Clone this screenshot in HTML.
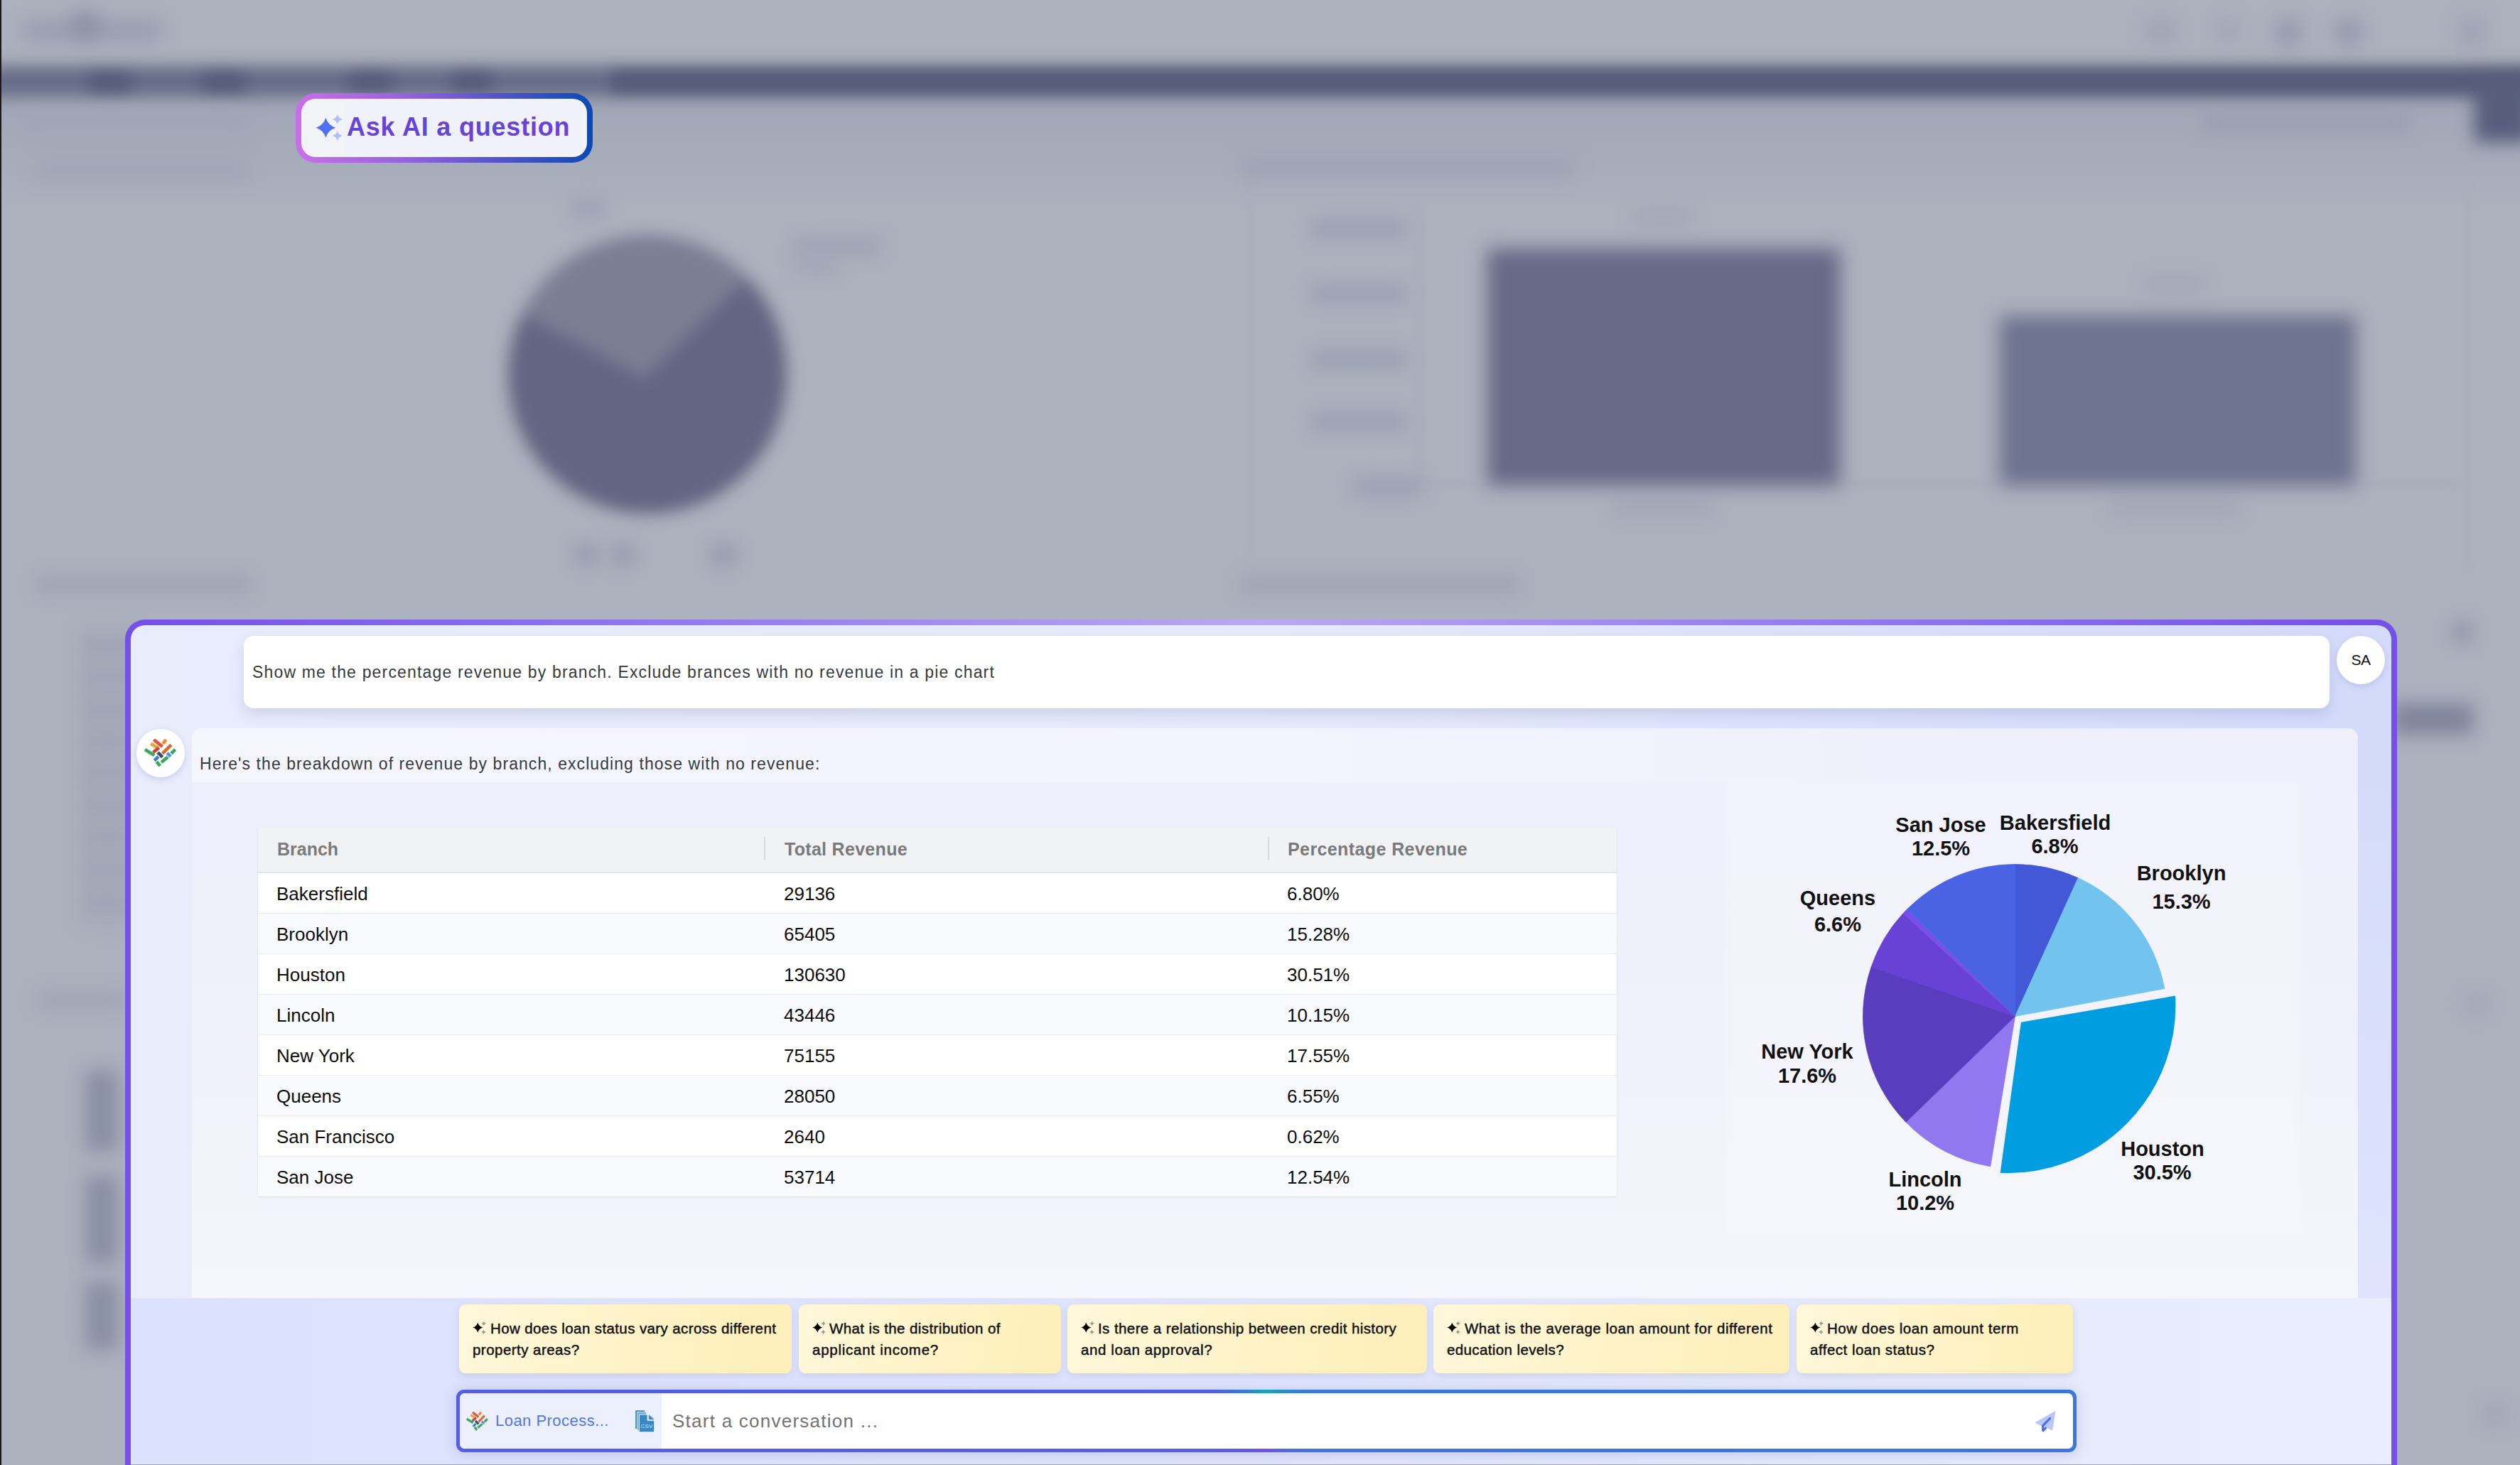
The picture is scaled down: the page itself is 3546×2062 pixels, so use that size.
<!DOCTYPE html>
<html><head><meta charset="utf-8">
<style>
html,body{margin:0;padding:0;}
body{width:3546px;height:2062px;overflow:hidden;position:relative;background:#aab0bc;font-family:"Liberation Sans",sans-serif;}
.a{position:absolute;}
.t{position:absolute;white-space:nowrap;}
#bg{position:absolute;left:0;top:0;width:3546px;height:2062px;overflow:hidden;}
#bg div{position:absolute;}
.row{position:absolute;left:363px;width:1912px;height:56px;border-bottom:1px solid #e8eaee;}
.row span{position:absolute;top:1px;line-height:57px;font-size:26px;color:#0d0d0d;white-space:nowrap;}
.chip{position:absolute;top:1836px;height:97px;border-radius:9px;background:linear-gradient(100deg,#fef7da 0%,#fef2c4 60%,#feefba 100%);box-shadow:0 4px 10px rgba(140,150,200,.28);}
.chip .l{position:absolute;left:19px;font-size:20.5px;font-weight:400;-webkit-text-stroke:0.45px #111;color:#111;white-space:nowrap;line-height:29px;}
.pl{font-family:"Liberation Sans",sans-serif;font-weight:700;font-size:29px;fill:#111;}
</style></head>
<body>
<!-- BACKGROUND -->
<div id="bg">
  <div style="left:0;top:0;width:3546px;height:95px;background:#abb1bd;"></div>
  <div style="left:0;top:140px;width:3546px;height:1922px;background:#abb1bd;"></div>
  <div style="left:30px;top:28px;width:200px;height:30px;border-radius:15px;background:#989eb0;filter:blur(12px);"></div>
  <div style="left:100px;top:15px;width:40px;height:40px;border-radius:50%;background:#8d93a6;filter:blur(12px);"></div>
  <div style="left:3020px;top:28px;width:40px;height:30px;background:#9ea4b4;filter:blur(12px);"></div>
  <div style="left:3120px;top:28px;width:30px;height:30px;background:#a0a6b6;filter:blur(12px);"></div>
  <div style="left:3200px;top:25px;width:40px;height:40px;border-radius:50%;background:#959bad;filter:blur(12px);"></div>
  <div style="left:3285px;top:25px;width:40px;height:40px;border-radius:50%;background:#959bad;filter:blur(12px);"></div>
  <div style="left:3460px;top:25px;width:36px;height:40px;background:#9ea4b4;filter:blur(12px);"></div>
  <div style="left:0;top:125px;width:3546px;height:170px;background:linear-gradient(180deg,#a0a6b5 0%,#a5abb9 50%,rgba(171,177,189,0) 100%);"></div>
  <div style="left:-20px;top:93px;width:3600px;height:43px;background:#666c87;filter:blur(11px);"></div>
  <div style="left:860px;top:101px;width:2720px;height:28px;background:#545a77;filter:blur(10px);"></div>
  <div style="left:125px;top:106px;width:60px;height:20px;background:#4f5573;filter:blur(11px);"></div>
  <div style="left:283px;top:106px;width:62px;height:20px;background:#4f5573;filter:blur(11px);"></div>
  <div style="left:490px;top:106px;width:62px;height:20px;background:#4f5573;filter:blur(11px);"></div>
  <div style="left:636px;top:106px;width:56px;height:20px;background:#4f5573;filter:blur(11px);"></div>
  <div style="left:3482px;top:110px;width:80px;height:90px;background:#575d7b;filter:blur(12px);"></div>
  <div style="left:30px;top:160px;width:320px;height:22px;background:#9ea4b4;filter:blur(12px);"></div>
  <div style="left:50px;top:228px;width:300px;height:22px;background:#9ea4b4;filter:blur(12px);"></div>
  <div style="left:1746px;top:222px;width:470px;height:26px;background:#9da3b3;filter:blur(12px);"></div>
  <div style="left:3100px;top:160px;width:290px;height:22px;background:#979dae;filter:blur(12px);"></div>
  <div style="left:715px;top:331px;width:392px;height:392px;border-radius:50%;background:conic-gradient(from 0deg at 191px 201px,#7a7f95 0deg 46deg,#626682 46deg 297.8deg,#7a7f95 297.8deg 360deg);filter:blur(11px);"></div>
  <div style="left:806px;top:280px;width:44px;height:26px;background:#9ca2b3;filter:blur(12px);"></div>
  <div style="left:1119px;top:336px;width:120px;height:22px;background:#9ca2b3;filter:blur(12px);"></div>
  <div style="left:1119px;top:362px;width:60px;height:22px;background:#a0a6b6;filter:blur(12px);"></div>
  <div style="left:810px;top:768px;width:30px;height:26px;background:#9399ab;filter:blur(12px);"></div>
  <div style="left:862px;top:768px;width:30px;height:26px;background:#9399ab;filter:blur(12px);"></div>
  <div style="left:1000px;top:768px;width:35px;height:26px;background:#9399ab;filter:blur(12px);"></div>
  <div style="left:52px;top:812px;width:300px;height:22px;background:#9da3b3;filter:blur(12px);"></div>
  <div style="left:1746px;top:812px;width:390px;height:22px;background:#9da3b3;filter:blur(12px);"></div>
  <div style="left:1846px;top:310px;width:132px;height:24px;background:#999fb1;filter:blur(12px);"></div>
  <div style="left:1846px;top:401px;width:132px;height:24px;background:#999fb1;filter:blur(12px);"></div>
  <div style="left:1846px;top:494px;width:132px;height:24px;background:#999fb1;filter:blur(12px);"></div>
  <div style="left:1846px;top:582px;width:132px;height:24px;background:#999fb1;filter:blur(12px);"></div>
  <div style="left:1906px;top:673px;width:94px;height:24px;background:#999fb1;filter:blur(12px);"></div>
  <div style="left:2300px;top:295px;width:80px;height:20px;background:#a0a6b6;filter:blur(12px);"></div>
  <div style="left:3020px;top:390px;width:80px;height:20px;background:#a0a6b6;filter:blur(12px);"></div>
  <div style="left:2270px;top:705px;width:140px;height:20px;background:#a0a6b6;filter:blur(12px);"></div>
  <div style="left:2970px;top:705px;width:180px;height:20px;background:#a0a6b6;filter:blur(12px);"></div>
  <div style="left:1995px;top:290px;width:3px;height:390px;background:#a4aab9;filter:blur(4px);"></div>
  <div style="left:1995px;top:680px;width:1460px;height:3px;background:#a4aab9;filter:blur(4px);"></div>
  <div style="left:1757px;top:250px;width:3px;height:530px;background:#a7adbb;filter:blur(4px);"></div>
  <div style="left:3472px;top:260px;width:3px;height:540px;background:#a7adbb;filter:blur(4px);"></div>
  <div style="left:2093px;top:350px;width:496px;height:333px;background:#666a87;filter:blur(13px);"></div>
  <div style="left:2814px;top:445px;width:501px;height:238px;background:#6e738f;filter:blur(13px);"></div>
  <div style="left:115px;top:885px;width:75px;height:420px;background:#a5abb9;filter:blur(12px);"></div>
  <div style="left:118px;top:900px;width:70px;height:18px;background:#9ea4b3;filter:blur(10px);"></div>
  <div style="left:118px;top:945px;width:70px;height:18px;background:#9ea4b3;filter:blur(10px);"></div>
  <div style="left:118px;top:990px;width:70px;height:18px;background:#9ea4b3;filter:blur(10px);"></div>
  <div style="left:118px;top:1035px;width:70px;height:18px;background:#9ea4b3;filter:blur(10px);"></div>
  <div style="left:118px;top:1080px;width:70px;height:18px;background:#9ea4b3;filter:blur(10px);"></div>
  <div style="left:118px;top:1125px;width:70px;height:18px;background:#9ea4b3;filter:blur(10px);"></div>
  <div style="left:118px;top:1170px;width:70px;height:18px;background:#9ea4b3;filter:blur(10px);"></div>
  <div style="left:118px;top:1215px;width:70px;height:18px;background:#9ea4b3;filter:blur(10px);"></div>
  <div style="left:118px;top:1260px;width:70px;height:18px;background:#9ea4b3;filter:blur(10px);"></div>
  <div style="left:120px;top:1506px;width:46px;height:114px;background:#8a90a4;filter:blur(12px);"></div>
  <div style="left:120px;top:1655px;width:46px;height:123px;background:#8a90a4;filter:blur(12px);"></div>
  <div style="left:120px;top:1804px;width:46px;height:96px;background:#8a90a4;filter:blur(12px);"></div>
  <div style="left:52px;top:1397px;width:124px;height:22px;background:#9ea4b4;filter:blur(12px);"></div>
  <div style="left:3450px;top:875px;width:30px;height:30px;border-radius:50%;background:#8e94a7;filter:blur(12px);"></div>
  <div style="left:3366px;top:990px;width:114px;height:44px;background:#80859c;filter:blur(12px);"></div>
  <div style="left:3470px;top:1400px;width:30px;height:26px;background:#a0a6b6;filter:blur(12px);"></div>
  <div style="left:3495px;top:1975px;width:30px;height:30px;background:#a0a6b6;filter:blur(12px);"></div>
</div>
<div class="a" style="left:0;top:0;width:2px;height:2062px;background:#1a1a1a;"></div>

<!-- ASK AI BUTTON -->
<div class="a" style="left:416px;top:131px;width:418px;height:98px;border-radius:28px;background:linear-gradient(90deg,#c86fe8 0%,#9a63de 35%,#5a55cc 65%,#0a4ab6 100%);"></div>
<div class="a" style="left:424px;top:139px;width:402px;height:82px;border-radius:20px;background:#f2f3f6;"></div>
<div class="a" style="left:485px;top:146px;width:333px;height:71px;background:#f1f1fb;"></div>
<svg class="a" style="left:440px;top:158px" width="50" height="46" viewBox="0 0 50 46">
  <path d="M18.40,7.70 Q21.74,18.34 32.30,21.70 Q21.74,25.06 18.40,35.70 Q15.06,25.06 4.50,21.70 Q15.06,18.34 18.40,7.70 Z" fill="#4f70f2"/>
  <path d="M34.80,3.30 Q36.24,8.58 42.00,9.90 Q36.24,11.22 34.80,16.50 Q33.36,11.22 27.60,9.90 Q33.36,8.58 34.80,3.30 Z" fill="#b0bff3"/>
  <path d="M34.80,26.30 Q36.24,31.74 42.00,33.10 Q36.24,34.46 34.80,39.90 Q33.36,34.46 27.60,33.10 Q33.36,31.74 34.80,26.30 Z" fill="#b0bff3"/>
</svg>
<div class="t" style="left:488px;top:143px;line-height:71px;font-size:36px;font-weight:700;letter-spacing:0.8px;color:#6644d8;">Ask AI a question</div>

<!-- PANEL -->
<div class="a" style="left:176px;top:872px;width:3197px;height:1250px;border-radius:28px;background:linear-gradient(90deg,#7350e8 0%,#9b82ee 30%,#bba8f2 50%,#9b82ee 70%,#7350e8 100%);"></div>
<div class="a" style="left:176px;top:905px;width:8px;height:1170px;background:#7650e6;"></div>
<div class="a" style="left:3365px;top:905px;width:8px;height:1170px;background:#7650e6;"></div>
<div class="a" style="left:184px;top:880px;width:3181px;height:1250px;border-radius:20px;background:radial-gradient(ellipse 1500px 1000px at 100% 10%,#d3dafa 0%,rgba(211,218,250,0) 100%),linear-gradient(90deg,#e9ecfb 0%,#e5e9fc 60%,#e1e6fc 100%);"></div>

<!-- USER MESSAGE -->
<div class="a" style="left:343px;top:895px;width:2935px;height:102px;border-radius:14px;background:#fff;box-shadow:0 8px 18px rgba(110,120,175,.22);"></div>
<div class="t" style="left:355px;top:895px;line-height:102px;font-size:23px;letter-spacing:1.167px;color:#343a40;">Show me the percentage revenue by branch. Exclude brances with no revenue in a pie chart</div>
<div class="a" style="left:3288px;top:895px;width:68px;height:68px;border-radius:50%;background:#fff;box-shadow:0 3px 8px rgba(110,120,175,.25);"></div>
<div class="t" style="left:3288px;top:895px;width:68px;line-height:68px;text-align:center;font-size:21px;letter-spacing:-0.5px;color:#111;">SA</div>

<!-- RESPONSE -->
<div class="a" style="left:270px;top:1025px;width:3048px;height:802px;border-radius:14px 14px 0 0;background:linear-gradient(180deg,#efeffb 0%,#f1f1fb 60%,#f5f5fd 100%);"></div>
<div class="a" style="left:270px;top:1025px;width:3048px;height:76px;border-radius:14px 14px 0 0;background:linear-gradient(90deg,#f4f5fd 0%,#f3f4fd 50%,rgba(240,240,251,0) 85%);"></div>
<div class="a" style="left:192px;top:1026px;width:68px;height:68px;border-radius:50%;background:#fff;box-shadow:0 3px 8px rgba(110,120,175,.25);"></div>
<svg class="a" style="left:203px;top:1040px" width="46.0" height="40.0" viewBox="0 0 46 40"><line x1="9.1" y1="6.8" x2="19" y2="12.5" stroke="#f0a232" stroke-width="4.6"/><line x1="13.3" y1="1.0" x2="25.6" y2="10.9" stroke="#e6533e" stroke-width="4.6"/><line x1="30.5" y1="1.0" x2="26.4" y2="6.8" stroke="#ef8a2c" stroke-width="4.6"/><line x1="37.9" y1="8.4" x2="25.6" y2="20.7" stroke="#e0652f" stroke-width="4.6"/><line x1="20.7" y1="12.5" x2="12.5" y2="19" stroke="#c9433a" stroke-width="4.6"/><line x1="19.1" y1="19" x2="25.6" y2="25.6" stroke="#3b4b60" stroke-width="4.6"/><line x1="1" y1="14.9" x2="14.2" y2="23.1" stroke="#36a95a" stroke-width="4.6"/><line x1="19.9" y1="24.8" x2="14.2" y2="30.5" stroke="#3b80c6" stroke-width="4.6"/><line x1="32.2" y1="19.9" x2="37.1" y2="24.8" stroke="#5b90dc" stroke-width="4.6"/><line x1="43.6" y1="14.9" x2="37.9" y2="20.7" stroke="#36a95a" stroke-width="4.6"/><line x1="33" y1="25.6" x2="24" y2="33" stroke="#36a95a" stroke-width="4.6"/><line x1="17.4" y1="32.2" x2="22.3" y2="37.9" stroke="#36a95a" stroke-width="4.6"/></svg>
<div class="t" style="left:281px;top:1040px;line-height:70px;font-size:23px;letter-spacing:1.068px;color:#343a40;">Here's the breakdown of revenue by branch, excluding those with no revenue:</div>

<!-- TABLE -->
<div class="a" style="left:363px;top:1165px;width:1912px;height:519px;background:#fff;box-shadow:0 1px 2px rgba(0,0,0,.12);"></div>
<div class="a" style="left:363px;top:1165px;width:1912px;height:62px;background:#f1f2f4;border-bottom:2px solid #e3e5e9;"></div>
<div class="a" style="left:1075px;top:1178px;width:2px;height:33px;background:#d9dadd;"></div>
<div class="a" style="left:1784px;top:1178px;width:2px;height:33px;background:#d9dadd;"></div>
<div class="t" style="left:390px;top:1164px;line-height:62px;font-size:25px;font-weight:700;color:#7a7a7a;">Branch</div>
<div class="t" style="left:1104px;top:1164px;line-height:62px;font-size:25px;font-weight:700;color:#7a7a7a;letter-spacing:0.3px;">Total Revenue</div>
<div class="t" style="left:1812px;top:1164px;line-height:62px;font-size:25px;font-weight:700;color:#7a7a7a;letter-spacing:0.4px;">Percentage Revenue</div>
<div class="row" style="top:1229px;background:#ffffff;border-bottom:1px solid #e8eaee;"><span style="left:26px">Bakersfield</span><span style="left:740px">29136</span><span style="left:1448px">6.80%</span></div>
<div class="row" style="top:1286px;background:#f9fafd;border-bottom:1px solid #e8eaee;"><span style="left:26px">Brooklyn</span><span style="left:740px">65405</span><span style="left:1448px">15.28%</span></div>
<div class="row" style="top:1343px;background:#ffffff;border-bottom:1px solid #e8eaee;"><span style="left:26px">Houston</span><span style="left:740px">130630</span><span style="left:1448px">30.51%</span></div>
<div class="row" style="top:1400px;background:#f9fafd;border-bottom:1px solid #e8eaee;"><span style="left:26px">Lincoln</span><span style="left:740px">43446</span><span style="left:1448px">10.15%</span></div>
<div class="row" style="top:1457px;background:#ffffff;border-bottom:1px solid #e8eaee;"><span style="left:26px">New York</span><span style="left:740px">75155</span><span style="left:1448px">17.55%</span></div>
<div class="row" style="top:1514px;background:#f9fafd;border-bottom:1px solid #e8eaee;"><span style="left:26px">Queens</span><span style="left:740px">28050</span><span style="left:1448px">6.55%</span></div>
<div class="row" style="top:1571px;background:#ffffff;border-bottom:1px solid #e8eaee;"><span style="left:26px">San Francisco</span><span style="left:740px">2640</span><span style="left:1448px">0.62%</span></div>
<div class="row" style="top:1628px;background:#f9fafd;border-bottom:0;height:56px;"><span style="left:26px">San Jose</span><span style="left:740px">53714</span><span style="left:1448px">12.54%</span></div>

<div class="a" style="left:2428px;top:1100px;width:810px;height:637px;background:rgba(255,255,255,.22);filter:blur(6px);"></div>
<!-- PIE -->
<svg class="a" style="left:2400px;top:1100px" width="900" height="650" viewBox="2400 1100 900 650">
<path d="M2835.5,1430.5 L2835.5,1216.5 A214,214 0 0 1 2924.2,1235.7 Z" fill="#4358d6" stroke="#4358d6" stroke-width="0.8"/>
<path d="M2835.5,1430.5 L2924.2,1235.7 A214,214 0 0 1 3045.9,1391.5 Z" fill="#72c3ee" stroke="#72c3ee" stroke-width="0.8"/>
<path d="M2835.5,1430.5 L2800.8,1641.7 A214,214 0 0 1 2681.9,1579.5 Z" fill="#9178f0" stroke="#9178f0" stroke-width="0.8"/>
<path d="M2835.5,1430.5 L2681.9,1579.5 A214,214 0 0 1 2633.2,1360.7 Z" fill="#5a3dbe" stroke="#5a3dbe" stroke-width="0.8"/>
<path d="M2835.5,1430.5 L2633.2,1360.7 A214,214 0 0 1 2678.0,1285.6 Z" fill="#6842d4" stroke="#6842d4" stroke-width="0.8"/>
<path d="M2835.5,1430.5 L2678.0,1285.6 A214,214 0 0 1 2683.8,1279.6 Z" fill="#7650e8" stroke="#7650e8" stroke-width="0.8"/>
<path d="M2835.5,1430.5 L2683.8,1279.6 A214,214 0 0 1 2835.5,1216.5 Z" fill="#4a62e4" stroke="#4a62e4" stroke-width="0.8"/>
<path d="M2842.6,1437.4 L3062.4,1399.8 A237.7,237.7 0 0 1 2812.9,1652.3 Z" fill="#009de0" stroke="#f4f2fd" stroke-width="3" stroke-linejoin="round"/>
<text class="pl" x="2731" y="1171" text-anchor="middle">San Jose</text>
<text class="pl" x="2731" y="1204" text-anchor="middle">12.5%</text>
<text class="pl" x="2892" y="1168" text-anchor="middle">Bakersfield</text>
<text class="pl" x="2891.5" y="1201" text-anchor="middle">6.8%</text>
<text class="pl" x="3069.5" y="1239" text-anchor="middle">Brooklyn</text>
<text class="pl" x="3069.5" y="1278.5" text-anchor="middle">15.3%</text>
<text class="pl" x="2586" y="1273.5" text-anchor="middle">Queens</text>
<text class="pl" x="2586" y="1310.5" text-anchor="middle">6.6%</text>
<text class="pl" x="2543" y="1490" text-anchor="middle">New York</text>
<text class="pl" x="2543" y="1523.5" text-anchor="middle">17.6%</text>
<text class="pl" x="2709" y="1670" text-anchor="middle">Lincoln</text>
<text class="pl" x="2709" y="1702.5" text-anchor="middle">10.2%</text>
<text class="pl" x="3043" y="1627" text-anchor="middle">Houston</text>
<text class="pl" x="3042.5" y="1660" text-anchor="middle">30.5%</text>
</svg>

<!-- CHIPS AREA -->
<div class="a" style="left:184px;top:1827px;width:3181px;height:235px;background:linear-gradient(90deg,#dde2fc 0%,#e0e5fc 50%,#e9edfd 100%);"></div>
<div class="chip" style="left:646px;width:468px;"><svg class="a" style="left:18px;top:24px" width="22" height="20" viewBox="0 0 22 20"><path d="M8.30,1.50 Q9.84,6.96 15.30,8.50 Q9.84,10.04 8.30,15.50 Q6.76,10.04 1.30,8.50 Q6.76,6.96 8.30,1.50 Z" fill="#050505"/><path d="M16.70,-0.50 Q17.36,2.14 20.00,2.80 Q17.36,3.46 16.70,6.10 Q16.04,3.46 13.40,2.80 Q16.04,2.14 16.70,-0.50 Z" fill="#9e9a88"/><path d="M16.50,11.40 Q17.16,14.04 19.80,14.70 Q17.16,15.36 16.50,18.00 Q15.84,15.36 13.20,14.70 Q15.84,14.04 16.50,11.40 Z" fill="#9e9a88"/></svg><div class="l" style="top:19px;left:44px;letter-spacing:0.39px">How does loan status vary across different</div><div class="l" style="top:49px;letter-spacing:0.465px">property areas?</div></div>
<div class="chip" style="left:1124px;width:369px;"><svg class="a" style="left:18px;top:24px" width="22" height="20" viewBox="0 0 22 20"><path d="M8.30,1.50 Q9.84,6.96 15.30,8.50 Q9.84,10.04 8.30,15.50 Q6.76,10.04 1.30,8.50 Q6.76,6.96 8.30,1.50 Z" fill="#050505"/><path d="M16.70,-0.50 Q17.36,2.14 20.00,2.80 Q17.36,3.46 16.70,6.10 Q16.04,3.46 13.40,2.80 Q16.04,2.14 16.70,-0.50 Z" fill="#9e9a88"/><path d="M16.50,11.40 Q17.16,14.04 19.80,14.70 Q17.16,15.36 16.50,18.00 Q15.84,15.36 13.20,14.70 Q15.84,14.04 16.50,11.40 Z" fill="#9e9a88"/></svg><div class="l" style="top:19px;left:43px;letter-spacing:0.397px">What is the distribution of</div><div class="l" style="top:49px;letter-spacing:0.747px">applicant income?</div></div>
<div class="chip" style="left:1502px;width:506px;"><svg class="a" style="left:18px;top:24px" width="22" height="20" viewBox="0 0 22 20"><path d="M8.30,1.50 Q9.84,6.96 15.30,8.50 Q9.84,10.04 8.30,15.50 Q6.76,10.04 1.30,8.50 Q6.76,6.96 8.30,1.50 Z" fill="#050505"/><path d="M16.70,-0.50 Q17.36,2.14 20.00,2.80 Q17.36,3.46 16.70,6.10 Q16.04,3.46 13.40,2.80 Q16.04,2.14 16.70,-0.50 Z" fill="#9e9a88"/><path d="M16.50,11.40 Q17.16,14.04 19.80,14.70 Q17.16,15.36 16.50,18.00 Q15.84,15.36 13.20,14.70 Q15.84,14.04 16.50,11.40 Z" fill="#9e9a88"/></svg><div class="l" style="top:19px;left:43px;letter-spacing:0.415px">Is there a relationship between credit history</div><div class="l" style="top:49px;letter-spacing:0.601px">and loan approval?</div></div>
<div class="chip" style="left:2017px;width:501px;"><svg class="a" style="left:18px;top:24px" width="22" height="20" viewBox="0 0 22 20"><path d="M8.30,1.50 Q9.84,6.96 15.30,8.50 Q9.84,10.04 8.30,15.50 Q6.76,10.04 1.30,8.50 Q6.76,6.96 8.30,1.50 Z" fill="#050505"/><path d="M16.70,-0.50 Q17.36,2.14 20.00,2.80 Q17.36,3.46 16.70,6.10 Q16.04,3.46 13.40,2.80 Q16.04,2.14 16.70,-0.50 Z" fill="#9e9a88"/><path d="M16.50,11.40 Q17.16,14.04 19.80,14.70 Q17.16,15.36 16.50,18.00 Q15.84,15.36 13.20,14.70 Q15.84,14.04 16.50,11.40 Z" fill="#9e9a88"/></svg><div class="l" style="top:19px;left:44px;letter-spacing:0.523px">What is the average loan amount for different</div><div class="l" style="top:49px;letter-spacing:0.386px">education levels?</div></div>
<div class="chip" style="left:2528px;width:389px;"><svg class="a" style="left:18px;top:24px" width="22" height="20" viewBox="0 0 22 20"><path d="M8.30,1.50 Q9.84,6.96 15.30,8.50 Q9.84,10.04 8.30,15.50 Q6.76,10.04 1.30,8.50 Q6.76,6.96 8.30,1.50 Z" fill="#050505"/><path d="M16.70,-0.50 Q17.36,2.14 20.00,2.80 Q17.36,3.46 16.70,6.10 Q16.04,3.46 13.40,2.80 Q16.04,2.14 16.70,-0.50 Z" fill="#9e9a88"/><path d="M16.50,11.40 Q17.16,14.04 19.80,14.70 Q17.16,15.36 16.50,18.00 Q15.84,15.36 13.20,14.70 Q15.84,14.04 16.50,11.40 Z" fill="#9e9a88"/></svg><div class="l" style="top:19px;left:43px;letter-spacing:0.538px">How does loan amount term</div><div class="l" style="top:49px;letter-spacing:0.494px">affect loan status?</div></div>

<!-- INPUT -->
<div class="a" style="left:642px;top:1956px;width:2280px;height:88px;border-radius:11px;box-shadow:0 2px 18px rgba(95,105,175,.28);background:conic-gradient(from 0deg at 1138px 44px,#17a6ae 0deg,#3a78dc 55deg,#3f72df 130deg,#7a4de2 180deg,#5a5be6 230deg,#5060e8 300deg,#17a6ae 360deg);"></div>
<div class="a" style="left:647px;top:1961px;width:2270px;height:78px;border-radius:7px;background:#fff;"></div>
<div class="a" style="left:647px;top:1961px;width:284px;height:78px;border-radius:7px 0 0 7px;background:#ebf0fc;"></div>
<div class="t" style="left:697px;top:1961px;line-height:78px;font-size:22px;letter-spacing:0.47px;color:#5276ee;">Loan Process...</div>
<svg class="a" style="left:656px;top:1987px" width="31.3" height="27.2" viewBox="0 0 46 40"><line x1="9.1" y1="6.8" x2="19" y2="12.5" stroke="#f0a232" stroke-width="4.6"/><line x1="13.3" y1="1.0" x2="25.6" y2="10.9" stroke="#e6533e" stroke-width="4.6"/><line x1="30.5" y1="1.0" x2="26.4" y2="6.8" stroke="#ef8a2c" stroke-width="4.6"/><line x1="37.9" y1="8.4" x2="25.6" y2="20.7" stroke="#e0652f" stroke-width="4.6"/><line x1="20.7" y1="12.5" x2="12.5" y2="19" stroke="#c9433a" stroke-width="4.6"/><line x1="19.1" y1="19" x2="25.6" y2="25.6" stroke="#3b4b60" stroke-width="4.6"/><line x1="1" y1="14.9" x2="14.2" y2="23.1" stroke="#36a95a" stroke-width="4.6"/><line x1="19.9" y1="24.8" x2="14.2" y2="30.5" stroke="#3b80c6" stroke-width="4.6"/><line x1="32.2" y1="19.9" x2="37.1" y2="24.8" stroke="#5b90dc" stroke-width="4.6"/><line x1="43.6" y1="14.9" x2="37.9" y2="20.7" stroke="#36a95a" stroke-width="4.6"/><line x1="33" y1="25.6" x2="24" y2="33" stroke="#36a95a" stroke-width="4.6"/><line x1="17.4" y1="32.2" x2="22.3" y2="37.9" stroke="#36a95a" stroke-width="4.6"/></svg>
<svg class="a" style="left:890px;top:1982px" width="36" height="38" viewBox="890 1982 36 38">
<rect x="894.2" y="1985.2" width="13" height="25.7" fill="#3a88c2"/>
<rect x="896.7" y="1987.5" width="12.6" height="25.8" fill="#6ea6d6" stroke="#f0f4fd" stroke-width="0.8"/>
<path d="M899.4,1990.9 L911.1,1990.9 L911.1,1999.2 L920.8,1999.2 L920.8,2015.8 L899.4,2015.8 Z" fill="#3a88c2" stroke="#f0f4fd" stroke-width="1"/>
<path d="M913.3,1991.8 L920,1997.7 L913.3,1997.7 Z" fill="#3a88c2" stroke="#3a88c2" stroke-width="0.8"/>
<text x="910" y="2010" text-anchor="middle" font-family="Liberation Sans" font-size="8" fill="#cfe0f2">CSV</text>
</svg>
<svg class="a" style="left:2860px;top:1982px" width="36" height="36" viewBox="0 0 36 36">
<path d="M4.6,20.4 L31.6,5.2 L27.5,30.2 L18.5,26.5 L14.8,31.8 L14.4,24.9 Z" fill="#b8c6f8" stroke="#b8c6f8" stroke-width="1.5" stroke-linejoin="round"/>
<polyline points="24.7,14.2 14.4,24.9 14.8,31.8 18.5,28.1" fill="none" stroke="#4a6cf2" stroke-width="3" stroke-linejoin="round" stroke-linecap="round"/>
</svg>
<div class="t" style="left:946px;top:1961px;line-height:78px;font-size:26px;letter-spacing:1.25px;color:#737373;">Start a conversation ...</div>

<div class="a" style="left:184px;top:2061px;width:3181px;height:1px;background:#a3a7b3;"></div>
</body></html>
